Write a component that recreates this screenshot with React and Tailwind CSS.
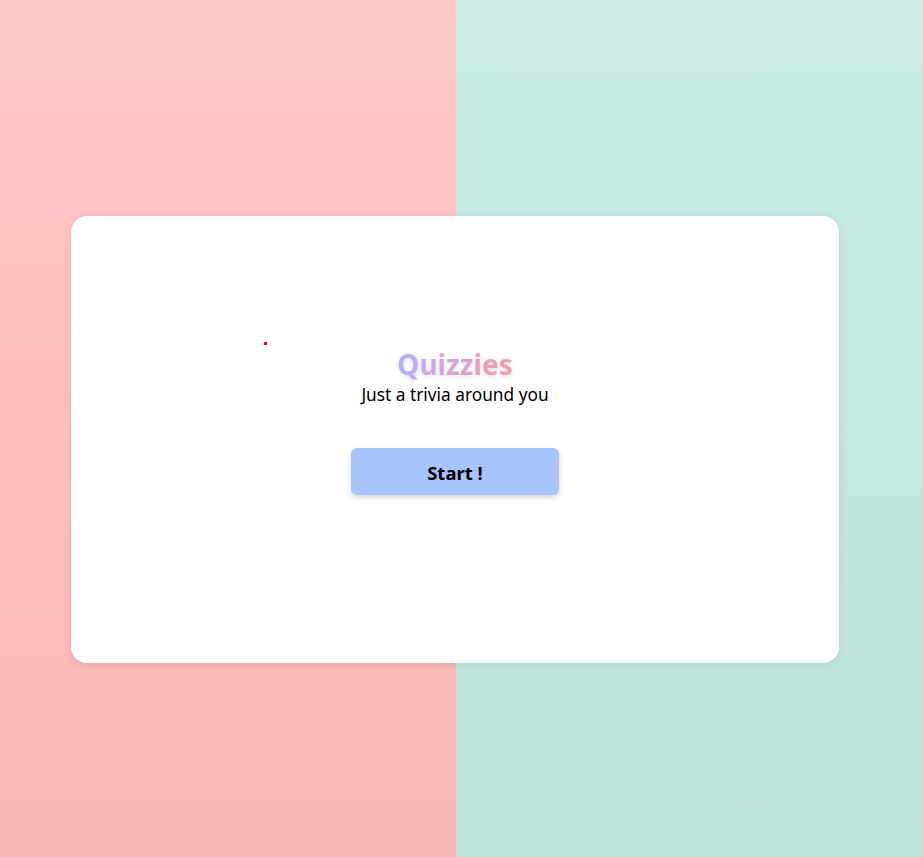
export default function App() {
  return (
    <div className="min-h-[857px] w-full pl-[71px] pt-[216px] font-['Noto_Sans',sans-serif] [background:linear-gradient(to_bottom,#fec9c7,#f9b6b4)_left_top/456px_100%_no-repeat,linear-gradient(to_bottom,#cbeae4,#bee3dc)]">
      <div className="relative flex h-[447px] w-[768px] flex-col items-center rounded-2xl bg-white pt-[128px] shadow-[0_2px_8px_rgba(0,0,0,0.08)]">
        <span className="absolute left-[193px] top-[126px] h-[3px] w-[3px] bg-[#f00]" />
        <h1 className="bg-[linear-gradient(to_right,#b2b0fd,#fb9aa5)] bg-clip-text text-[28px] font-bold leading-[40px] text-transparent blur-[0.4px] [filter:drop-shadow(0_1px_2px_rgba(0,0,0,0.12))]">
          Quizzies
        </h1>
        <p className="-mt-[1px] text-[17.3px] leading-[24px] text-black">Just a trivia around you</p>
        <button
          type="button"
          className="mt-[41px] h-[47px] w-[208px] rounded-md bg-[#a8c4fe] pt-[2px] text-[18.5px] font-bold text-black shadow-[0_3px_6px_rgba(0,0,0,0.15)]"
        >
          Start !
        </button>
      </div>
    </div>
  );
}
